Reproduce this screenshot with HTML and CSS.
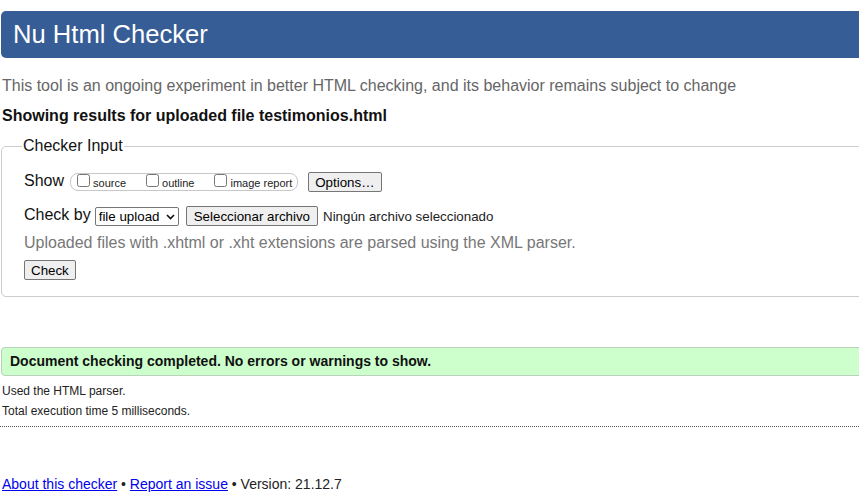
FILE: index.html
```html
<!DOCTYPE html>
<html lang="en">
<head>
<meta charset="utf-8">
<title>Nu Html Checker</title>
<link rel="stylesheet" href="styles.css">
</head>
<body>
<div class="page">
  <h1 class="title">Nu Html Checker</h1>
  <p class="intro">This tool is an ongoing experiment in better HTML checking, and its behavior remains subject to change</p>
  <p class="showing">Showing results for uploaded file testimonios.html</p>
  <form class="checker">
    <fieldset class="box">
      <legend class="legend">Checker Input</legend>
      <div class="row">
        <span class="label">Show</span>
        <span class="group">
          <label class="opt"><input type="checkbox" class="cb"><span class="opt-text">source</span></label>
          <label class="opt"><input type="checkbox" class="cb"><span class="opt-text">outline</span></label>
          <label class="opt"><input type="checkbox" class="cb"><span class="opt-text">image report</span></label>
        </span>
        <button type="button" class="btn btn-options">Options…</button>
      </div>
      <div class="row row-check">
        <span class="label">Check by</span>
        <span class="sel-wrap">
          <select class="sel"><option>file upload</option></select>
          <svg class="chev" width="9" height="6" viewBox="0 0 9 6" aria-hidden="true"><path d="M1 1l3.5 3.5L8 1" fill="none" stroke="#111" stroke-width="1.6"/></svg>
        </span>
        <button type="button" class="btn btn-file">Seleccionar archivo</button>
        <span class="file-name">Ningún archivo seleccionado</span>
      </div>
      <p class="hint">Uploaded files with .xhtml or .xht extensions are parsed using the XML parser.</p>
      <div class="row row-submit"><button type="button" class="btn">Check</button></div>
    </fieldset>
  </form>
  <p class="success">Document checking completed. No errors or warnings to show.</p>
  <p class="meta meta-first">Used the HTML parser.</p>
  <p class="meta">Total execution time 5 milliseconds.</p>
  <div class="rule"></div>
  <p class="footer"><a class="link" href="#">About this checker</a> • <a class="link" href="#">Report an issue</a> • Version: 21.12.7</p>
</div>
</body>
</html>
```
FILE: styles.css
```css
html, body {
  overflow: hidden;
}
body {
  margin: 0;
  font-family: "Liberation Sans", Arial, sans-serif;
  color: #111;
  background: #fff;
}
.page {
  width: 900px;
  padding-left: 1px;
}
.title {
  margin: 11px 0 0;
  height: 47px;
  line-height: 47px;
  padding-left: 12px;
  background: #365d95;
  color: #fff;
  font-size: 25.6px;
  font-weight: normal;
  border-radius: 5px;
}
.intro {
  margin: 19px 0 0;
  padding-left: 1px;
  font-size: 16px;
  line-height: 18px;
  color: #666;
}
.showing {
  margin: 12px 0 0;
  padding-left: 1px;
  font-size: 16px;
  line-height: 18px;
  font-weight: bold;
}
.checker {
  margin: 12px 0 0;
}
.box {
  margin: 0;
  padding: 17px 0 16px 22px;
  border: 1px solid #ccc;
  border-radius: 5px;
  min-width: 0;
}
.legend {
  padding: 0 1px;
  margin-left: -2px;
  font-size: 16px;
  line-height: 18px;
  color: #111;
}
.row {
  display: flex;
  align-items: center;
  height: 20px;
}
.label {
  font-size: 16px;
  line-height: 18px;
  margin-bottom: 2px;
}
.group {
  display: flex;
  align-items: center;
  gap: 20px;
  height: 16px;
  margin-left: 6px;
  padding: 0 5px 0 6px;
  border: 1px solid #c8c8c8;
  border-radius: 8px;
}
.opt {
  display: flex;
  align-items: baseline;
  gap: 3px;
  font-size: 11px;
  color: #222;
}
.cb {
  margin: 0;
  width: 13px;
  height: 13px;
}
.opt-text {
  line-height: 13px;
}
.btn {
  height: 20px;
  padding: 0 6px;
  font-family: "Liberation Sans", Arial, sans-serif;
  font-size: 13.33px;
  color: #000;
  background: #efefef;
  border: 1px solid #767676;
  border-radius: 2px;
}
.btn-options {
  margin-left: 10px;
}
.row-check {
  margin-top: 14px;
}
.sel-wrap {
  position: relative;
  display: flex;
  margin-left: 4px;
}
.sel {
  appearance: none;
  -webkit-appearance: none;
  width: 84px;
  height: 19px;
  padding: 0 0 0 3px;
  font-family: "Liberation Sans", Arial, sans-serif;
  font-size: 13.33px;
  color: #000;
  background: #fff;
  border: 1px solid #767676;
  border-radius: 2px;
}
.chev {
  position: absolute;
  right: 4px;
  top: 7px;
  pointer-events: none;
}
.btn-file {
  margin-left: 7px;
  padding: 0 7px;
}
.file-name {
  margin-left: 5px;
  font-size: 13.33px;
  color: #222;
}
.hint {
  margin: 8px 0 0;
  font-size: 16px;
  line-height: 18px;
  color: #777;
}
.row-submit {
  margin-top: 8px;
}
.success {
  margin: 50px 0 0;
  height: 27px;
  line-height: 27px;
  padding-left: 8px;
  font-size: 14px;
  font-weight: bold;
  color: #111;
  background: #ccffcc;
  border: 1px solid #b9d2b9;
  border-radius: 4px;
}
.meta {
  margin: 0;
  padding-left: 1px;
  font-size: 12px;
  line-height: 20px;
  color: #222;
}
.meta-first {
  margin-top: 5px;
}
.rule {
  margin: 5px 0 0 -1px;
  border-top: 1px dotted #555;
}
.footer {
  margin: 49px 0 0;
  padding-left: 1px;
  font-size: 14px;
  line-height: 16px;
  color: #222;
}
.link {
  color: #0000ee;
}
```
